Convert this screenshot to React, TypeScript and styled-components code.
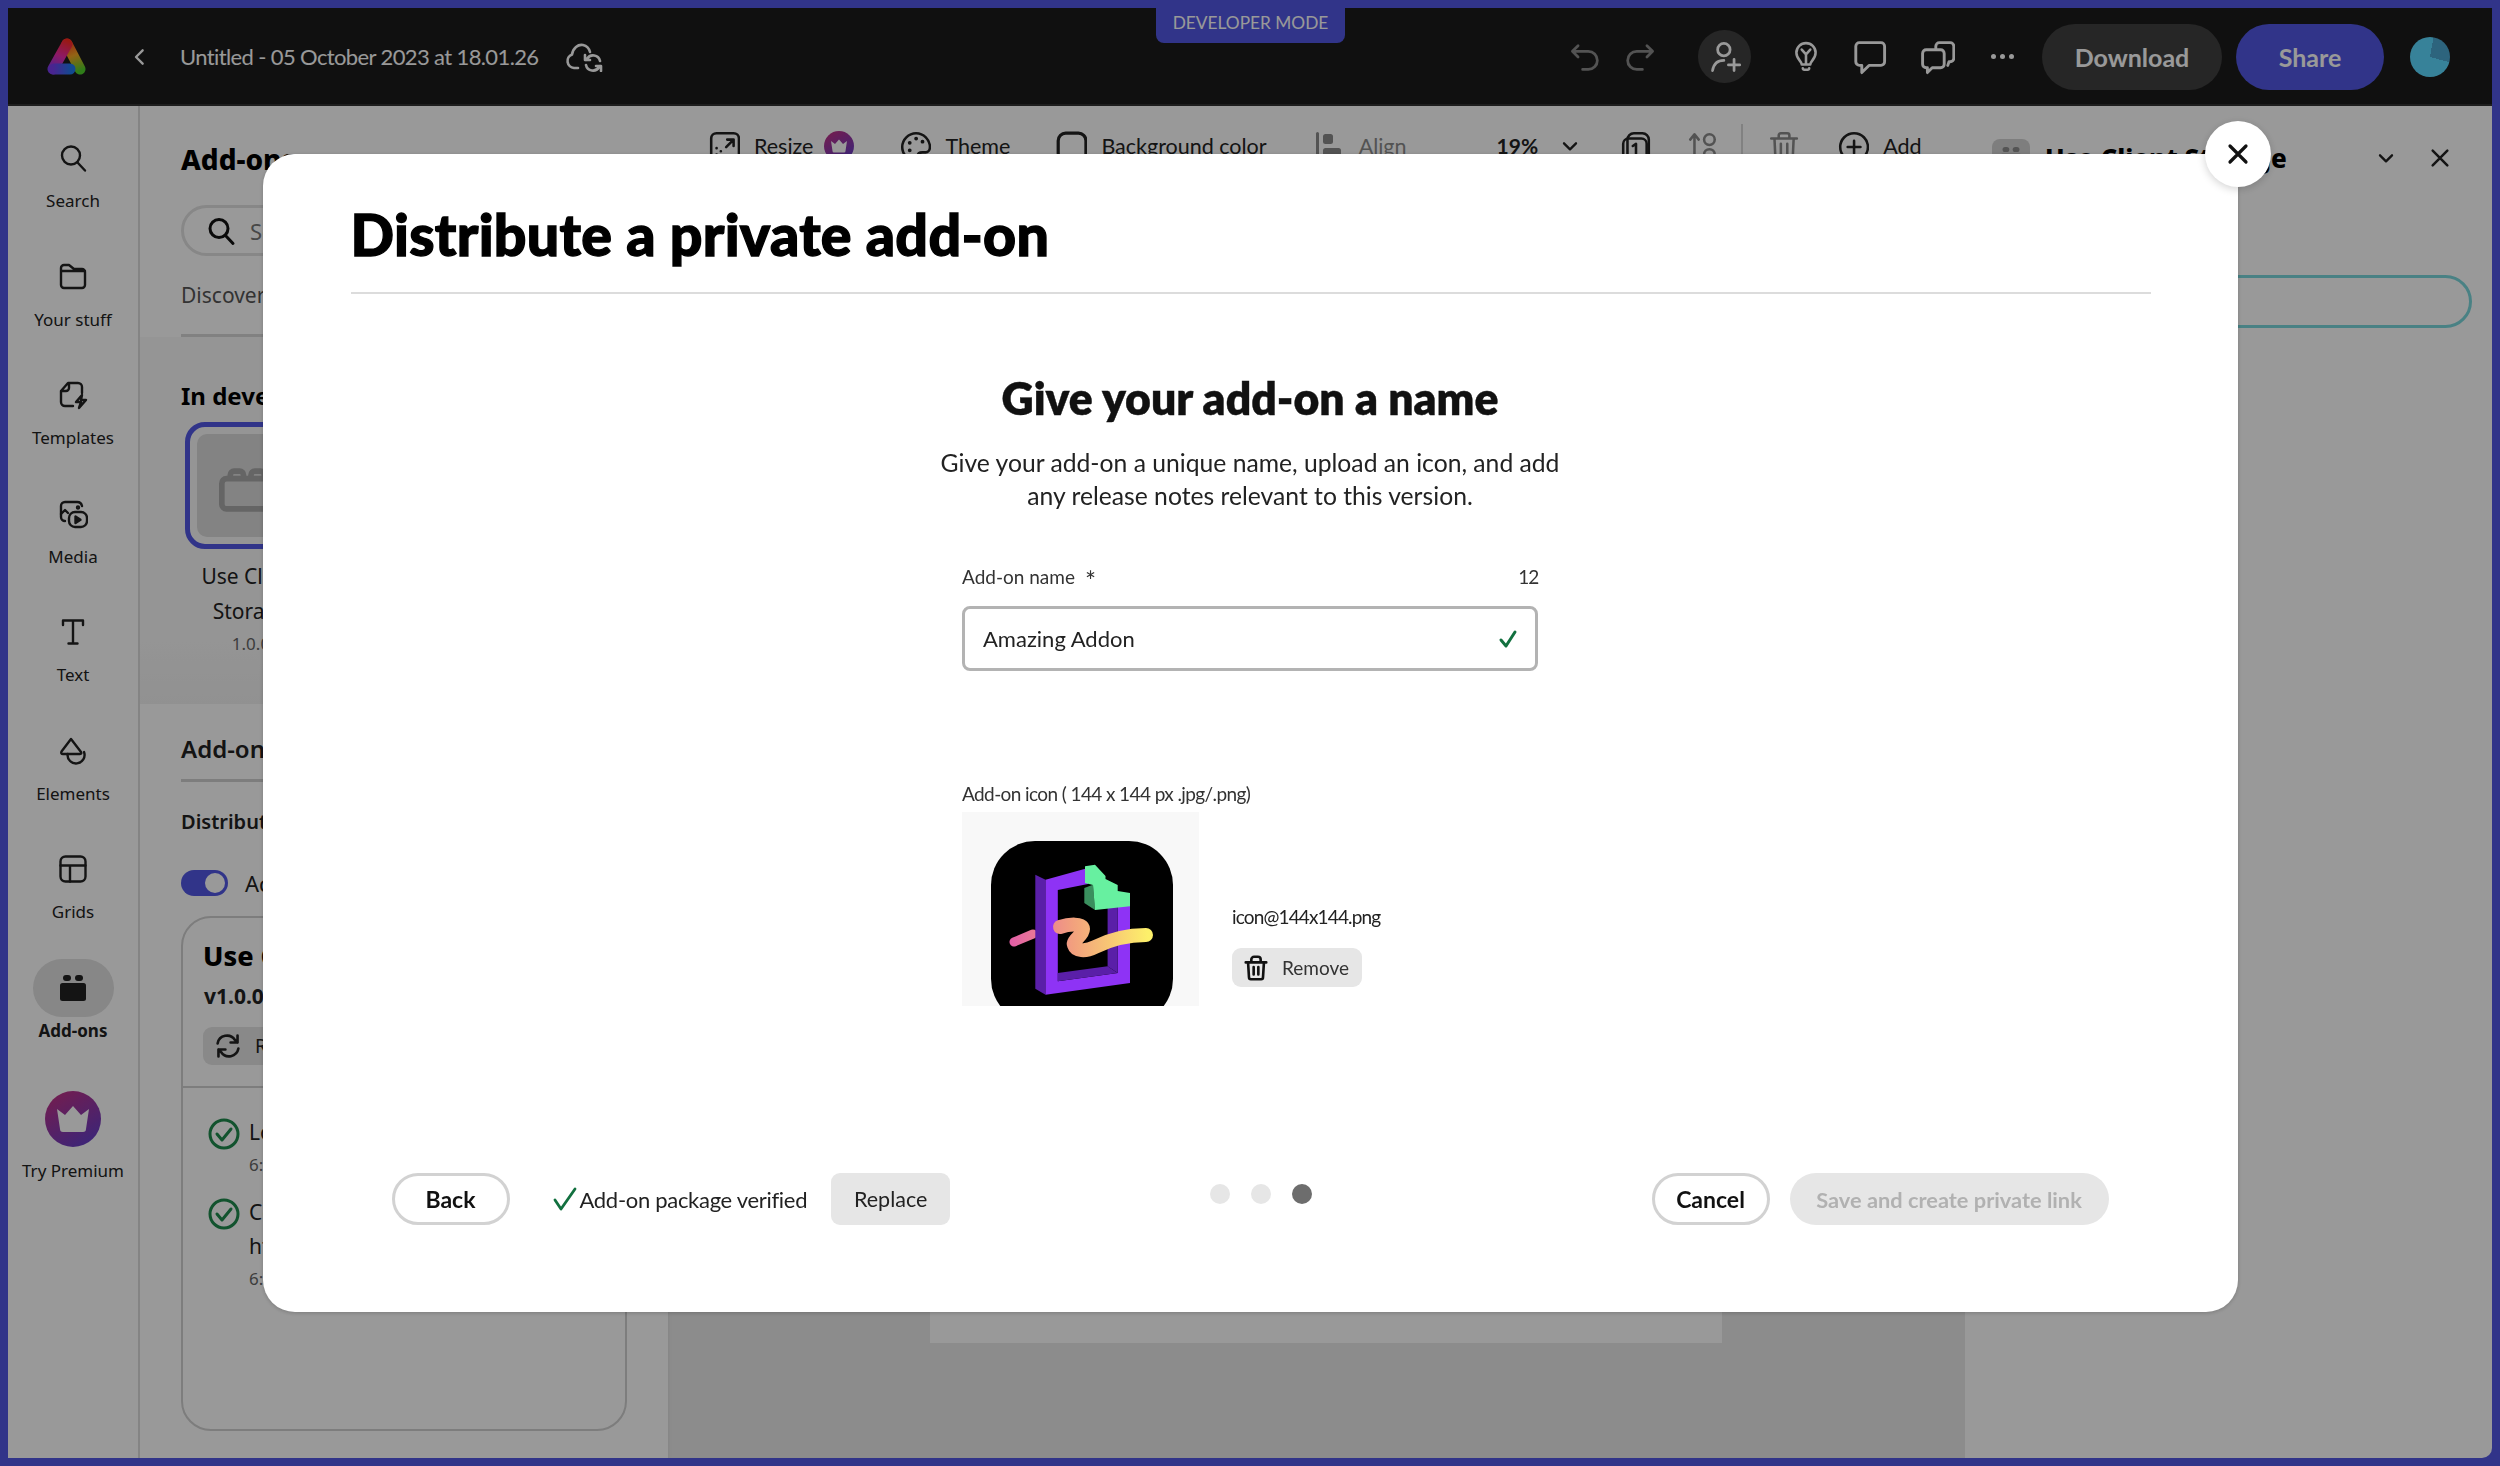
import styled, { createGlobalStyle } from "styled-components";
import { ReactNode } from "react";

const GlobalStyle = createGlobalStyle`
  html, body { margin: 0; padding: 0; }
  body { font-family: "Noto Sans", sans-serif; color: #222; overflow: hidden; }
  * { box-sizing: border-box; }
`;

const Stroke = ({ size = 30, w = 2.4, color = "currentColor", children }: { size?: number; w?: number; color?: string; children: ReactNode }) => (
  <svg width={size} height={size} viewBox="0 0 30 30" fill="none" stroke={color} strokeWidth={w} strokeLinecap="round" strokeLinejoin="round">
    {children}
  </svg>
);

const railItems: { label: string; icon: ReactNode }[] = [
  { label: "Search", icon: <Stroke><circle cx="13" cy="12.5" r="9" /><path d="M19.5 19.5 27 27.5" /></Stroke> },
  { label: "Your stuff", icon: <Stroke><path d="M3 9V6a3 3 0 0 1 3-3h5l5 4h8a3 3 0 0 1 3 3v13a3 3 0 0 1-3 3H6a3 3 0 0 1-3-3V9h24" /></Stroke> },
  { label: "Templates", icon: <Stroke><path d="M15 26H7a4 4 0 0 1-4-4V11l7-8h10a4 4 0 0 1 4 4v6M3 11h5a3 3 0 0 0 3-3V3" /><path d="M24 15l-6 7h5l-2 6 7-8h-5z" /></Stroke> },
  { label: "Media", icon: <Stroke><path d="M7 22a4 4 0 0 1-4-4V7a4 4 0 0 1 4-4h12a5 5 0 0 1 5 4" /><path d="M3 15l4-4 3 3" /><circle cx="20" cy="8.5" r="1" /><rect x="11" y="13" width="18" height="15" rx="6" /><path d="M17.5 17.5v6.5l5-3.2z" fill="currentColor" /></Stroke> },
  { label: "Text", icon: <Stroke><path d="M5 8V3.5h20V8M15 3.5v23M10.5 26.5h9" /></Stroke> },
  { label: "Elements", icon: <Stroke><path d="M13 3 3.500 15.500Q2.500 18 5 18H22Q24 18 23 16z" /><path d="M26 16A8.500 8.500 0 1 1 9.600 18" /></Stroke> },
  { label: "Grids", icon: <Stroke><rect x="2.500" y="2.500" width="25" height="25" rx="5" /><path d="M2.500 11.500h25M12 11.500v16" /></Stroke> },
];

export default function App() {
  return (
    <Frame>
      <GlobalStyle />
      <Header>
        <LeftCluster>
          <LogoMark />
          <BackChevron />
          <DocTitle>Untitled - 05 October 2023 at 18.01.26</DocTitle>
          <CloudSync />
        </LeftCluster>
        <DevBadge>DEVELOPER MODE</DevBadge>
        <RightCluster>
          <HeadIcon $disabled $ml={0}><Stroke size={34}><path d="M8 5 3 10l5 5M3 10h14a8 8 0 0 1 0 16h-5" /></Stroke></HeadIcon>
          <HeadIcon $disabled $ml={19}><Stroke size={34}><path d="M22 5l5 5-5 5M27 10H13a8 8 0 0 0 0 16h5" /></Stroke></HeadIcon>
          <InviteCircle><Stroke size={34}><circle cx="14" cy="8.500" r="5.500" /><path d="M4 27c1-6 5-9 10-9M23 17v10M18 22h10" /></Stroke></InviteCircle>
          <HeadIcon $ml={39}><Stroke size={32}><path d="M11 22c0-3-5-5-5-11a9 9 0 0 1 18 0c0 6-5 8-5 11zM12 25.500c0 2 6 2 6 0M11 8l4 4.500L19 8M15 12.500V22" /></Stroke></HeadIcon>
          <HeadIcon $ml={29}><Stroke size={36}><path d="M7 3h18a3 3 0 0 1 3 3v13a3 3 0 0 1-3 3H15l-6 6v-6H7a3 3 0 0 1-3-3V6a3 3 0 0 1 3-3z" /></Stroke></HeadIcon>
          <HeadIcon $ml={32}><Stroke size={36}><path d="M14 8V6a3 3 0 0 1 3-3h9a3 3 0 0 1 3 3v10a3 3 0 0 1-3 3h-1l-1 3" /><path d="M6 9h12a3 3 0 0 1 3 3v9a3 3 0 0 1-3 3h-7l-4 4v-4H6a3 3 0 0 1-3-3v-9a3 3 0 0 1 3-3z" /></Stroke></HeadIcon>
          <MoreDots $ml={36}><i /><i /><i /></MoreDots>
          <DownloadButton>Download</DownloadButton>
          <ShareButton>Share</ShareButton>
          <Avatar />
        </RightCluster>
      </Header>

      <Workspace>
        <Rail>
          {railItems.map((item) => (
            <RailItem key={item.label}>
              <RailIcon>{item.icon}</RailIcon>
              <RailLabel>{item.label}</RailLabel>
            </RailItem>
          ))}
          <RailItem>
            <RailIcon $active>
              <svg width="28" height="26" viewBox="0 0 28 26" fill="#222">
                <rect x="4" y="0" width="8" height="6" rx="3" />
                <rect x="16" y="0" width="8" height="6" rx="3" />
                <rect x="1" y="8" width="26" height="18" rx="2.500" />
              </svg>
            </RailIcon>
            <RailLabel $bold>Add-ons</RailLabel>
          </RailItem>
          <PremiumItem>
            <PremiumBadge>
              <svg width="36" height="28" viewBox="0 0 36 28" fill="#fff"><path d="M2 4l8 6 8-9 8 9 8-6-3 20a3 3 0 0 1-3 3H8a3 3 0 0 1-3-3z" /></svg>
            </PremiumBadge>
            <RailLabel>Try Premium</RailLabel>
          </PremiumItem>
        </Rail>

        <AddonsPanel>
          <PanelHead>
            <PanelTitle>Add-ons</PanelTitle>
            <PanelChevron><Stroke size={22} w={3}><path d="M6 11l9 9 9-9" /></Stroke></PanelChevron>
          </PanelHead>
          <SearchBox>
            <Stroke size={30} w={3} color="#111"><circle cx="13" cy="12.500" r="9" /><path d="M19.500 19.500 27 27.500" /></Stroke>
            <SearchHint>Search</SearchHint>
          </SearchBox>
          <Tabs><TabLabel>Discover</TabLabel></Tabs>
          <DevSection>
            <SectionTitle>In development</SectionTitle>
            <DevCard>
              <DevTile>
                <svg width="86" height="46" viewBox="0 0 86 46" fill="none" stroke="#a8a8a8" strokeWidth="6" strokeLinejoin="round"><path d="M12 10V7a4 4 0 0 1 4-4h6a4 4 0 0 1 4 4v3M34 10V7a4 4 0 0 1 4-4h6a4 4 0 0 1 4 4v3" /><rect x="3" y="11" width="80" height="32" rx="5" /></svg>
              </DevTile>
            </DevCard>
            <DevLabel>Use Client<br />Storage<DevVersion>1.0.0</DevVersion></DevLabel>
          </DevSection>
          <TestSection>
            <TestTitle>Add-on testing</TestTitle>
            <Distribute>Distribution</Distribute>
            <ToggleRow><Toggle /><ToggleText>Active</ToggleText></ToggleRow>
            <VersionCard>
              <VersionTop>
                <VersionName>Use Client Storage</VersionName>
                <VersionNo>v1.0.0</VersionNo>
                <ReloadButton>
                  <Stroke size={26} w={3}><path d="M3 12a11 11 0 0 1 20-4l3 3M26 3v8h-8M27 18a11 11 0 0 1-20 4l-3-3M4 27v-8h8" /></Stroke>
                  <span>Refresh</span>
                </ReloadButton>
              </VersionTop>
              <LogRow $top={30}>
                <CheckCircle />
                <LogText>Loaded<LogTime>6:01</LogTime></LogText>
              </LogRow>
              <LogRow $top={17}>
                <CheckCircle />
                <LogText>Connected<br />https<LogTime>6:01</LogTime></LogText>
              </LogRow>
            </VersionCard>
          </TestSection>
        </AddonsPanel>

        <CanvasColumn>
          <Toolbar>
            <ToolItem $ml={0}>
              <Stroke size={32}><rect x="3" y="3" width="26" height="26" rx="5" /><path d="M18 9h6v6M24 9l-7 7M8 17h.1M12 20h.1M8 23h.1" /></Stroke>
              <ToolText>Resize</ToolText>
              <ToolCrown>
                <svg width="18" height="16" viewBox="0 0 36 28" fill="#fff"><path d="M2 4l8 6 8-9 8 9 8-6-3 20a3 3 0 0 1-3 3H8a3 3 0 0 1-3-3z" /></svg>
              </ToolCrown>
            </ToolItem>
            <ToolItem $ml={45}>
              <Stroke size={32}><path d="M16 3C9 3 3 9 3 16s6 13 13 13c3 0 3-2 2-4-1-3 1-4 4-4h3c2 0 4-2 4-5 0-7-6-13-13-13z" /><path d="M10 12h.1M10 19h.1M16 8h.1M22 11h.1" strokeWidth="3.500" /></Stroke>
              <ToolText>Theme</ToolText>
            </ToolItem>
            <ToolItem $ml={45}>
              <Stroke size={32} w={3}><rect x="3" y="3" width="26" height="26" rx="7" /></Stroke>
              <ToolText>Background color</ToolText>
            </ToolItem>
            <ToolItem $ml={46} $disabled>
              <svg width="32" height="32" viewBox="0 0 32 32" fill="#8b8b8b"><rect x="3" y="2" width="3" height="28" rx="1.500" /><rect x="10" y="4" width="10" height="10" rx="2.500" /><rect x="10" y="18" width="18" height="10" rx="2.500" /></svg>
              <ToolText>Align</ToolText>
            </ToolItem>
            <ZoomValue>19%</ZoomValue>
            <ZoomChevron><Stroke size={20} w={3.500}><path d="M6 11l9 9 9-9" /></Stroke></ZoomChevron>
            <ToolItem $ml={40}>
              <Stroke size={32}><path d="M7 28V9a6 6 0 0 1 6-6h8a6 6 0 0 1 6 6v19" /><rect x="3" y="8" width="22" height="22" rx="5" /><path d="M12 15l3-2v11" /></Stroke>
            </ToolItem>
            <ToolItem $ml={35} $disabled>
              <Stroke size={32} color="#8b8b8b"><circle cx="21" cy="9" r="5" /><circle cx="21" cy="23" r="5" /><path d="M7 28V5M3 9l4-5 4 5" /></Stroke>
            </ToolItem>
            <ToolDivider />
            <ToolItem $ml={24} $disabled>
              <Stroke size={32} color="#8b8b8b"><path d="M4 8h24M11 8V5a2 2 0 0 1 2-2h6a2 2 0 0 1 2 2v3M7 8l1 21h16l1-21M13 13v11M19 13v11" /></Stroke>
            </ToolItem>
            <ToolItem $ml={38}>
              <Stroke size={32}><circle cx="16" cy="16" r="13" /><path d="M16 10v12M10 16h12" /></Stroke>
              <ToolText>Add</ToolText>
            </ToolItem>
          </Toolbar>
          <Stage><PageSheet /></Stage>
        </CanvasColumn>

        <SidePanel>
          <SideHead>
            <SideTile>
              <svg width="26" height="22" viewBox="0 0 28 26" fill="#8d8d8d">
                <rect x="4" y="0" width="8" height="6" rx="3" />
                <rect x="16" y="0" width="8" height="6" rx="3" />
                <rect x="1" y="8" width="26" height="18" rx="2.500" />
              </svg>
            </SideTile>
            <SideTitle>Use Client Storage</SideTitle>
            <SideChevron><Stroke size={20} w={3.500}><path d="M6 11l9 9 9-9" /></Stroke></SideChevron>
            <SideClose><Stroke size={22} w={3.400}><path d="M5 5l20 20M25 5 5 25" /></Stroke></SideClose>
          </SideHead>
          <SideField />
        </SidePanel>
      </Workspace>

      <Overlay>
        <Modal>
          <CloseButton>
            <svg width="22" height="22" viewBox="0 0 22 22" fill="none" stroke="#111" strokeWidth="3.200" strokeLinecap="round"><path d="M3 3l16 16M19 3 3 19" /></svg>
          </CloseButton>
          <ModalHead><ModalTitle>Distribute a private add-on</ModalTitle></ModalHead>
          <ModalBody>
            <StepTitle>Give your add-on a name</StepTitle>
            <StepText>Give your add-on a unique name, upload an icon, and add<br />any release notes relevant to this version.</StepText>
            <Form>
              <LabelRow>
                <FieldLabel>Add-on name<Required>*</Required></FieldLabel>
                <CountLabel>12</CountLabel>
              </LabelRow>
              <NameInput>
                <span>Amazing Addon</span>
                <svg width="20" height="20" viewBox="0 0 20 20" fill="none" stroke="#12703f" strokeWidth="3" strokeLinecap="round" strokeLinejoin="round"><path d="M3 11l5 6L17 3" /></svg>
              </NameInput>
              <IconLabel>Add-on icon ( 144 x 144 px .jpg/.png)</IconLabel>
              <IconRow>
                <IconTile><AddonArt /></IconTile>
                <IconSide>
                  <FileName>icon@144x144.png</FileName>
                  <RemoveButton>
                    <Stroke size={28} w={2.800} color="#111"><path d="M4 9h22M10 9V6a3 3 0 0 1 3-3h4a3 3 0 0 1 3 3v3M6.500 9l1 16a2 2 0 0 0 2 2h11a2 2 0 0 0 2-2l1-16M12.500 14v8M17.500 14v8" /></Stroke>
                    <span>Remove</span>
                  </RemoveButton>
                </IconSide>
              </IconRow>
            </Form>
          </ModalBody>
          <ModalFooter>
            <FooterLeft>
              <OutlineButton>Back</OutlineButton>
              <Verified>
                <svg width="24" height="24" viewBox="0 0 24 24" fill="none" stroke="#12703f" strokeWidth="2.800" strokeLinecap="round" strokeLinejoin="round"><path d="M2 13l6 9L22 2" /></svg>
                <span>Add-on package verified</span>
              </Verified>
              <ReplaceButton>Replace</ReplaceButton>
            </FooterLeft>
            <Dots><Dot /><Dot /><Dot $on /></Dots>
            <FooterRight>
              <OutlineButton>Cancel</OutlineButton>
              <SaveButton>Save and create private link</SaveButton>
            </FooterRight>
          </ModalFooter>
        </Modal>
      </Overlay>
    </Frame>
  );
}

const LogoMark = () => (
  <svg width="40" height="40" viewBox="0 0 40 40" fill="none" strokeWidth="11" strokeLinecap="round" strokeLinejoin="round">
    <defs>
      <linearGradient id="lgL" gradientUnits="userSpaceOnUse" x1="20" y1="3" x2="6" y2="34">
        <stop offset="0" stopColor="#ff2b1f" /><stop offset="0.5" stopColor="#ec2ba8" /><stop offset="1" stopColor="#7a3cf0" />
      </linearGradient>
      <linearGradient id="lgR" gradientUnits="userSpaceOnUse" x1="20" y1="3" x2="33" y2="34">
        <stop offset="0" stopColor="#ff2b1f" /><stop offset="0.5" stopColor="#f5a623" /><stop offset="1" stopColor="#4fd02a" />
      </linearGradient>
      <linearGradient id="lgB" gradientUnits="userSpaceOnUse" x1="6" y1="33" x2="24" y2="33">
        <stop offset="0" stopColor="#7a3cf0" /><stop offset="1" stopColor="#1f7bf0" />
      </linearGradient>
    </defs>
    <path d="M20 7 33 32" stroke="url(#lgR)" />
    <path d="M20 7 6 32" stroke="url(#lgL)" />
    <path d="M7 32h16" stroke="url(#lgB)" />
  </svg>
);

const BackChevron = () => (
  <BackIcon><Stroke size={20} w={3.500}><path d="M19 5 9 15l10 10" /></Stroke></BackIcon>
);

const CloudSync = () => (
  <CloudIcon>
    <svg width="38" height="30" viewBox="0 0 38 30" fill="none" stroke="currentColor" strokeWidth="2.600" strokeLinecap="round" strokeLinejoin="round">
      <path d="M13 26H9a7 7 0 0 1-2-13.500C8 6 13 2 18 3c4 1 6 3 7 7" />
      <path d="M35 19a7 7 0 0 0-13-2l-1 1M20 13v5h5M21 23a7 7 0 0 0 13 2l1-1M36 29v-5h-5" />
    </svg>
  </CloudIcon>
);

const CheckCircle = () => (
  <svg width="32" height="32" viewBox="0 0 32 32" fill="none" stroke="#1f8a4d" strokeWidth="3" strokeLinecap="round" strokeLinejoin="round">
    <circle cx="16" cy="16" r="14" /><path d="M9 16l5 6 9-11" />
  </svg>
);

// the uploaded add-on picture, clipped by its tile at the bottom
const AddonArt = () => (
  <svg width="182" height="182" viewBox="0 0 182 182">
    <defs>
      <linearGradient id="squig" gradientUnits="userSpaceOnUse" x1="20" y1="100" x2="157" y2="94">
        <stop offset="0" stopColor="#e25fa6" /><stop offset="0.45" stopColor="#f2a07e" /><stop offset="1" stopColor="#fdf06a" />
      </linearGradient>
    </defs>
    <rect width="182" height="182" rx="44" fill="#000" />
    <path d="M23 101 42 93" stroke="url(#squig)" strokeWidth="9" strokeLinecap="round" fill="none" />
    <path d="M44.300 33.700 54.500 38.700V153.700L44.300 147.700z" fill="#5a1fa8" />
    <path d="M54.500 38.700 97 27V43L66.800 49V140.300L126.700 132V64L139 61V142L54.500 153.700z" fill="#8e33f5" />
    <path d="M66.800 132 116.600 125.300 126.700 132 66.800 140.300z" fill="#5a1fa8" />
    <path d="M116.600 67 126.700 64V132L116.600 125.300z" fill="#5a1fa8" />
    <path d="M93.300 47 102 43.700 104 69 93.300 62z" fill="#3a8f5e" />
    <path d="M94 25.300 104 23.700 114.500 35V38L126.700 44V50L139 52V65.300L104 69 102 44 94 42z" fill="#67f0a0" />
    <path d="M69 86C78 83 92 82 92 88 92 95 81 99 83 104 85 110 94 111 104 106 118 99 135 94 155 94" stroke="url(#squig)" strokeWidth="14" strokeLinecap="round" fill="none" />
  </svg>
);

const Frame = styled.div`
  width: 100vw;
  height: 100vh;
  background: #5258e4;
  padding: 8px;
  display: flex;
  flex-direction: column;
`;
const Header = styled.header`
  position: relative;
  height: 98px;
  flex: none;
  background: #1c1c1c;
  border-bottom: 2px solid #333;
  color: #fff;
  display: flex;
  align-items: center;
  justify-content: space-between;
`;
const LeftCluster = styled.div`
  display: flex;
  align-items: center;
  padding: 0 0 0 39px;
  height: 100%;
  margin-top: 1px;
`;
const BackIcon = styled.span`
  display: flex;
  margin-left: 43px;
`;
const DocTitle = styled.span`
  font: 400 22px "Lato", sans-serif;
  margin-left: 30px;
  letter-spacing: -0.62px;
`;
const CloudIcon = styled.span`
  display: flex;
  margin-left: 26px;
`;
const DevBadge = styled.div`
  position: absolute;
  top: 0;
  left: 1148px;
  width: 189px;
  height: 35px;
  padding-bottom: 6px;
  background: #5258e4;
  border-radius: 0 0 8px 8px;
  font: 400 17.300px "Lato", sans-serif;
  display: flex;
  align-items: center;
  justify-content: center;
`;
const RightCluster = styled.div`
  display: flex;
  align-items: center;
  margin-top: 1px;
  padding-right: 42px;
`;
const HeadIcon = styled.span<{ $disabled?: boolean; $ml: number }>`
  display: flex;
  margin-left: ${(p) => p.$ml}px;
  color: ${(p) => (p.$disabled ? "#8a8a8a" : "#fff")};
`;
const InviteCircle = styled.span`
  width: 53px;
  height: 53px;
  border-radius: 50%;
  background: #404040;
  margin-left: 42px;
  display: flex;
  align-items: center;
  justify-content: center;
`;
const MoreDots = styled.span<{ $ml: number }>`
  display: flex;
  gap: 4px;
  margin-left: ${(p) => p.$ml}px;
  i { width: 5px; height: 5px; border-radius: 50%; background: #fff; }
`;
const DownloadButton = styled.div`
  width: 180px;
  height: 66px;
  border-radius: 33px;
  background: #404040;
  margin-left: 28px;
  font: 700 25px "Lato", sans-serif;
  display: flex;
  align-items: center;
  justify-content: center;
`;
const ShareButton = styled(DownloadButton)`
  width: 148px;
  background: #5258e4;
  margin-left: 14px;
`;
const Avatar = styled.div`
  width: 40px;
  height: 40px;
  border-radius: 50%;
  margin-left: 26px;
  background: conic-gradient(from 10deg, #4ba7d0 0 95deg, #5cd9ff 95deg 360deg);
`;
const Workspace = styled.div`
  flex: 1;
  min-height: 0;
  display: flex;
  background: #fff;
  border-bottom-right-radius: 10px;
  overflow: hidden;
`;
const Rail = styled.nav`
  width: 132px;
  flex: none;
  border-right: 2px solid #dcdcdc;
  padding-top: 23px;
  display: flex;
  flex-direction: column;
  align-items: center;
  gap: 32.5px;
`;
const RailItem = styled.div`
  display: flex;
  flex-direction: column;
  align-items: center;
  height: 86px;
  flex: none;
`;
const RailIcon = styled.div<{ $active?: boolean }>`
  width: 81px;
  height: 58px;
  border-radius: 29px;
  background: ${(p) => (p.$active ? "#e1e1e1" : "transparent")};
  display: flex;
  align-items: center;
  justify-content: center;
`;
const RailLabel = styled.div<{ $bold?: boolean }>`
  font-size: 17px;
  line-height: 28px;
  font-weight: ${(p) => (p.$bold ? 700 : 400)};
  white-space: nowrap;
`;
const PremiumItem = styled(RailItem)`
  height: auto;
  margin-top: 4px;
`;
const PremiumBadge = styled.div`
  width: 56px;
  height: 56px;
  flex: none;
  margin: 10px 0;
  border-radius: 50%;
  background: linear-gradient(150deg, #c7307f, #5a3fd0);
  display: flex;
  align-items: center;
  justify-content: center;
`;
const AddonsPanel = styled.aside`
  width: 528px;
  flex: none;
  display: flex;
  flex-direction: column;
`;
const PanelHead = styled.div`
  height: 99px;
  flex: none;
  padding: 6px 44px 0 41px;
  display: flex;
  align-items: center;
  justify-content: space-between;
`;
const PanelTitle = styled.div`
  font-size: 28px;
  font-weight: 800;
  color: #000;
`;
const PanelChevron = styled.span`
  display: flex;
`;
const SearchBox = styled.div`
  height: 51px;
  flex: none;
  margin: 0 41px;
  border: 3px solid #e1e1e1;
  border-radius: 26px;
  padding-left: 22px;
  display: flex;
  align-items: center;
  gap: 14px;
`;
const SearchHint = styled.span`
  font-size: 22px;
  color: #777;
`;
const Tabs = styled.div`
  height: 81px;
  flex: none;
  margin: 0 41px;
  border-bottom: 3px solid #d8d8d8;
  display: flex;
  align-items: center;
`;
const TabLabel = styled.span`
  font-size: 21px;
  color: #555;
`;
const DevSection = styled.section`
  height: 367px;
  flex: none;
  padding: 44px 41px 0;
  background: linear-gradient(#f9f9f9 80%, #f2f2f2);
`;
const SectionTitle = styled.div`
  font-size: 24px;
  line-height: 30px;
  font-weight: 700;
  color: #000;
`;
const DevCard = styled.div`
  width: 127px;
  height: 127px;
  margin: 11px 0 0 4px;
  border: 5px solid #5258e4;
  border-radius: 20px;
  padding: 7px;
`;
const DevTile = styled.div`
  width: 100%;
  height: 100%;
  background: #dadada;
  border-radius: 10px;
  display: flex;
  align-items: center;
  padding: 8px 0 0 22px;
`;
const DevLabel = styled.div`
  width: 132px;
  margin: 10px 0 0 4px;
  text-align: center;
  font-size: 21px;
  line-height: 35px;
`;
const DevVersion = styled.div`
  font-size: 17px;
  line-height: 30px;
  color: #666;
`;
const TestSection = styled.section`
  padding: 30px 41px 0;
`;
const TestTitle = styled.div`
  font-size: 24px;
  line-height: 30px;
  font-weight: 600;
  padding-bottom: 15px;
  border-bottom: 3px solid #d0d0d0;
`;
const Distribute = styled.div`
  font-size: 20px;
  line-height: 30px;
  font-weight: 600;
  margin-top: 25px;
`;
const ToggleRow = styled.div`
  display: flex;
  align-items: center;
  gap: 17px;
  margin-top: 33px;
  height: 26px;
`;
const Toggle = styled.span`
  position: relative;
  width: 47px;
  height: 26px;
  border-radius: 13px;
  background: #5258e4;
  &::after {
    content: "";
    position: absolute;
    right: 3px;
    top: 3px;
    width: 20px;
    height: 20px;
    border-radius: 50%;
    background: #fff;
  }
`;
const ToggleText = styled.span`
  font-size: 22px;
`;
const VersionCard = styled.div`
  height: 515px;
  margin-top: 20px;
  border: 2px solid #d0d0d0;
  border-radius: 30px;
`;
const VersionTop = styled.div`
  height: 170px;
  padding: 20px 0 0 20px;
  border-bottom: 2px solid #d0d0d0;
`;
const VersionName = styled.div`
  font-size: 27px;
  line-height: 36px;
  font-weight: 800;
  color: #000;
`;
const VersionNo = styled.div`
  font-size: 21px;
  line-height: 30px;
  font-weight: 700;
  margin-top: 7px;
  padding-left: 1px;
`;
const ReloadButton = styled.div`
  width: 200px;
  height: 38px;
  margin: 16px 0 0 0;
  background: #e4e4e4;
  border-radius: 9px;
  padding-left: 12px;
  font-size: 19px;
  display: flex;
  align-items: center;
  gap: 14px;
`;
const LogRow = styled.div<{ $top: number }>`
  display: flex;
  gap: 9px;
  padding-left: 25px;
  margin-top: ${(p) => p.$top}px;
`;
const LogText = styled.div`
  font-size: 21px;
  line-height: 34px;
  margin-top: -3px;
`;
const LogTime = styled.div`
  font-size: 17px;
  line-height: 32px;
  color: #666;
`;
const CanvasColumn = styled.main`
  width: 1297px;
  flex: none;
  display: flex;
  flex-direction: column;
  background: #e9e9e9;
  box-shadow: inset 3px 0 3px -2px #dedede;
`;
const Toolbar = styled.div`
  height: 80px;
  flex: none;
  background: #fff;
  padding: 24px 0 0 40px;
  display: flex;
  align-items: flex-start;
`;
const ToolItem = styled.div<{ $ml: number; $disabled?: boolean }>`
  display: flex;
  align-items: center;
  gap: 14px;
  height: 32px;
  margin-left: ${(p) => p.$ml}px;
  color: ${(p) => (p.$disabled ? "#8b8b8b" : "#222")};
`;
const ToolText = styled.span`
  font: 400 21.500px "Lato", sans-serif;
`;
const ToolCrown = styled.span`
  width: 30px;
  height: 30px;
  border-radius: 50%;
  margin-left: -3px;
  background: linear-gradient(150deg, #c7307f, #5a3fd0);
  display: flex;
  align-items: center;
  justify-content: center;
`;
const ZoomValue = styled.span`
  font: 700 21px "Lato", sans-serif;
  line-height: 32px;
  margin-left: 90px;
`;
const ZoomChevron = styled.span`
  display: flex;
  margin: 6px 0 0 22px;
`;
const ToolDivider = styled.span`
  width: 2px;
  height: 44px;
  margin: -6px 0 0 22px;
  background: #d8d8d8;
`;
const Stage = styled.div`
  flex: 1;
  display: flex;
  justify-content: center;
  padding: 40px 0 0 18px;
`;
const PageSheet = styled.div`
  width: 792px;
  height: 1117px;
  background: #fff;
`;
const SidePanel = styled.aside`
  flex: 1;
  min-width: 0;
  padding: 32px 20px 0 27px;
`;
const SideHead = styled.div`
  display: flex;
  align-items: center;
  height: 40px;
`;
const SideTile = styled.span`
  width: 38px;
  height: 38px;
  flex: none;
  border-radius: 8px;
  background: #d2d2d2;
  display: flex;
  align-items: center;
  justify-content: center;
`;
const SideTitle = styled.span`
  font-size: 26px;
  font-weight: 800;
  color: #000;
  margin-left: 15px;
  white-space: nowrap;
`;
const SideChevron = styled.span`
  display: flex;
  margin-left: auto;
`;
const SideClose = styled.span`
  display: flex;
  margin: 0 21px 0 33px;
`;
const SideField = styled.div`
  height: 53px;
  margin-top: 97px;
  border: 3px solid #7ad8dc;
  border-radius: 27px;
`;
const Overlay = styled.div`
  position: fixed;
  inset: 0;
  background: rgba(0, 0, 0, 0.4);
  display: flex;
  align-items: center;
  justify-content: center;
`;
const Modal = styled.div`
  position: relative;
  width: 1975px;
  height: 1158px;
  background: #fff;
  border-radius: 32px;
  box-shadow: 0 1px 4px rgba(0, 0, 0, 0.2);
  display: flex;
  flex-direction: column;
`;
const CloseButton = styled.div`
  position: absolute;
  top: -33px;
  right: -33px;
  width: 66px;
  height: 66px;
  border-radius: 50%;
  background: #fff;
  box-shadow: 0 2px 8px rgba(0, 0, 0, 0.18);
  display: flex;
  align-items: center;
  justify-content: center;
`;
const ModalHead = styled.div`
  height: 140px;
  margin: 0 87px 0 88px;
  border-bottom: 2px solid #dcdcdc;
  flex: none;
  display: flex;
  align-items: center;
  padding-top: 22px;
`;
const ModalTitle = styled.h1`
  margin: 0;
  font: 900 57.300px/1 "Lato", sans-serif;
  letter-spacing: 0.3px;
  -webkit-text-stroke: 1.3px #000;
  color: #000;
`;
const ModalBody = styled.div`
  flex: 1;
  display: flex;
  flex-direction: column;
  align-items: center;
  padding-top: 81px;
`;
const StepTitle = styled.h2`
  margin: 0;
  font: 800 44.500px/46px "Lato", sans-serif;
  -webkit-text-stroke: 0.4px #111;
  color: #111;
`;
const StepText = styled.p`
  margin: 25px 0 0;
  font: 400 24.700px/33px "Lato", sans-serif;
  color: #222;
  text-align: center;
`;
const Form = styled.div`
  width: 576px;
  margin-top: 51px;
`;
const LabelRow = styled.div`
  display: flex;
  justify-content: space-between;
  align-items: center;
`;
const FieldLabel = styled.span`
  font: 400 19px/26px "Lato", sans-serif;
  color: #333;
  display: flex;
  align-items: center;
`;
const CountLabel = styled(FieldLabel)`
  letter-spacing: -1.2px;
`;
const Required = styled.span`
  margin-left: 10px;
  font-size: 26px;
  line-height: 20px;
  padding-top: 8px;
`;
const NameInput = styled.div`
  height: 65px;
  margin-top: 15px;
  border: 3.500px solid #b3b3b3;
  border-radius: 8px;
  padding: 0 17px 0 18px;
  display: flex;
  align-items: center;
  justify-content: space-between;
  font: 400 22px "Lato", sans-serif;
  color: #222;
`;
const IconLabel = styled.div`
  font: 400 19px/26px "Lato", sans-serif;
  letter-spacing: -0.6px;
  color: #333;
  margin-top: 110px;
`;
const IconRow = styled.div`
  display: flex;
  align-items: flex-start;
  gap: 33px;
  margin-top: 5px;
`;
const IconTile = styled.div`
  width: 237px;
  height: 194px;
  background: #f8f8f8;
  overflow: hidden;
  padding: 29px 0 0 29px;
  flex: none;
`;
const IconSide = styled.div`
  padding-top: 92px;
`;
const FileName = styled.div`
  font: 400 19px/26px "Lato", sans-serif;
  letter-spacing: -0.85px;
  color: #222;
`;
const RemoveButton = styled.div`
  width: 130px;
  height: 39px;
  margin-top: 18px;
  background: #e6e6e6;
  border-radius: 9px;
  padding-left: 10px;
  font: 400 19px "Lato", sans-serif;
  color: #333;
  display: flex;
  align-items: center;
  gap: 12px;
`;
const ModalFooter = styled.div`
  flex: none;
  height: 52px;
  margin: 0 129px 87px;
  display: grid;
  grid-template-columns: 1fr auto 1fr;
`;
const FooterLeft = styled.div`
  display: flex;
  align-items: center;
`;
const FooterRight = styled.div`
  display: flex;
  align-items: center;
  justify-content: flex-end;
  gap: 20px;
`;
const OutlineButton = styled.div`
  width: 118px;
  height: 52px;
  border: 3px solid #d2d2d2;
  border-radius: 26px;
  background: #fff;
  font: 700 23px "Lato", sans-serif;
  color: #111;
  display: flex;
  align-items: center;
  justify-content: center;
`;
const Verified = styled.div`
  display: flex;
  align-items: center;
  gap: 3px;
  margin-left: 43px;
  font: 400 22px "Lato", sans-serif;
  letter-spacing: -0.3px;
  color: #222;
`;
const ReplaceButton = styled.div`
  width: 119px;
  height: 52px;
  margin-left: 24px;
  border-radius: 9px;
  background: #e6e6e6;
  font: 400 21.500px "Lato", sans-serif;
  color: #222;
  display: flex;
  align-items: center;
  justify-content: center;
`;
const Dots = styled.div`
  display: flex;
  gap: 21px;
  margin: 11px 0 0 22px;
`;
const Dot = styled.span<{ $on?: boolean }>`
  width: 20px;
  height: 20px;
  border-radius: 50%;
  background: ${(p) => (p.$on ? "#6d6d6d" : "#e6e6e6")};
`;
const SaveButton = styled.div`
  width: 319px;
  height: 52px;
  border-radius: 26px;
  background: #e6e6e6;
  font: 700 21.800px "Lato", sans-serif;
  color: #b1b1b1;
  display: flex;
  align-items: center;
  justify-content: center;
`;
